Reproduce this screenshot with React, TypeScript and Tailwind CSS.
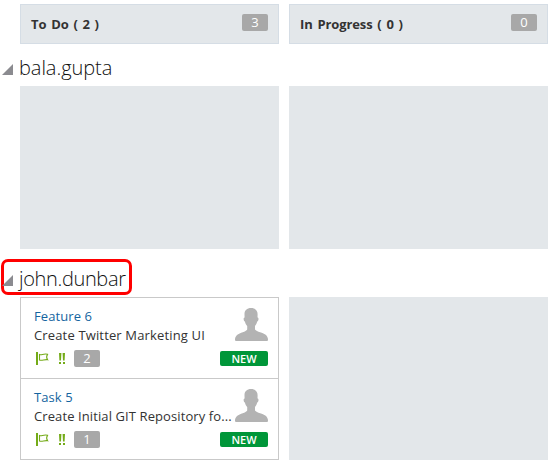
import type { ReactNode } from "react";

function Flag() {
  return (
    <svg width="13" height="13" viewBox="0 0 13 13" className="block" fill="none">
      <rect x="0" y="0" width="2" height="13" fill="#74ab18" />
      <path d="M3.5 2.6C5.5 3.6 7.5 1.2 11.6 2.3C10.4 4 10.4 6 11.6 7.7C8.5 7.2 6 9 3.5 8.1Z" stroke="#74ab18" strokeWidth="1.1" />
    </svg>
  );
}

function Priority() {
  return (
    <svg width="6" height="11" viewBox="0 0 6 11" className="block" fill="#74ab18">
      <path d="M0 0H2.4L2 7.5H.4ZM3.6 0H6L5.6 7.5H4ZM0 9H2V11H0ZM4 9H6V11H4Z" />
    </svg>
  );
}

function Avatar() {
  return (
    <svg width="33" height="33" viewBox="0 0 33 33" className="block" fill="#b3b3b3">
      <path d="M16 0C20 0 22.7 2.4 22.6 6.5L22.5 9.4C24 9.3 23.8 12.8 22.2 13.6C21.8 15.5 21 16.8 20 18V21.5C21.5 24 28.5 24.5 31 27C32.5 28.5 33 30.5 33 31.5C33 32.5 32.5 33 31.5 33H1.5C.5 33 0 32.5 0 31.5C0 30 .5 28.5 2 27C5 24.5 11 24 12.2 21.5V18C11 16.8 10.3 15.5 9.9 13.6C8.3 12.8 8.2 9.3 9.6 9.4L9.5 6.5C9.4 2.4 12 0 16 0Z" />
    </svg>
  );
}

function Count({ children }: { children: ReactNode }) {
  return (
    <span className="flex h-[17px] w-[26px] items-center justify-center rounded-[2px] bg-[#a8a8a8] text-[13px] leading-[17px] text-white">
      {children}
    </span>
  );
}

function ColumnHeader({ title, count }: { title: string; count: number }) {
  return (
    <div className="flex h-10 w-[259px] justify-between border border-[#d5dde5] bg-[#e3e7ea] pt-[9px] pr-[10px] pl-[10px]">
      <h2 className="text-[13px] leading-[20px] font-bold tracking-[-0.1px] whitespace-nowrap text-[#333] [word-spacing:1.5px]">{title}</h2>
      <Count>{count}</Count>
    </div>
  );
}

function RowTitle({ name, tracking }: { name: string; tracking: string }) {
  return (
    <div className="flex items-center gap-[6px] pl-[2px]">
      <svg width="11" height="11" viewBox="0 0 11 11" className="mt-[3px] block shrink-0" fill="#8b8b90">
        <path d="M11 0V11H0Z" />
      </svg>
      <h3 className={`text-[20px] leading-[28px] font-light whitespace-nowrap text-[#111] ${tracking}`}>{name}</h3>
    </div>
  );
}

function Card({ id, title, count, tracking }: { id: string; title: string; count: number; tracking: string }) {
  return (
    <article className="flex h-[81px] flex-col border-b border-[#c9c9c9] pr-[10px] pl-[13px]">
      <div className="flex h-[52px] justify-between pt-[10px]">
        <div className="-mt-px w-0 whitespace-nowrap">
          <div className="text-[13px] leading-[19px] tracking-[0.08px] text-[#1464a0]">{id}</div>
          <div className={`text-[13px] leading-[19px] text-[#333] ${tracking}`}>{title}</div>
        </div>
        <Avatar />
      </div>
      <div className="flex items-center justify-between">
        <div className="flex items-center pl-[2px]">
          <Flag />
          <span className="ml-[10px]"><Priority /></span>
          <span className="ml-[9px]"><Count>{count}</Count></span>
        </div>
        <span className="flex h-[15px] w-12 items-center justify-center rounded-[2px] bg-[#009639] text-[11px] leading-[15px] font-semibold text-white">
          NEW
        </span>
      </div>
    </article>
  );
}

function EmptyCell() {
  return <div className="h-[163px] w-[259px] bg-[#e3e7ea]" />;
}

export default function App() {
  return (
    <main className="h-[464px] w-[551px] overflow-hidden bg-white pt-1 font-['Open_Sans','Noto_Sans',sans-serif]">
      <div className="flex gap-[10px] pl-5">
        <ColumnHeader title="To Do ( 2 )" count={3} />
        <ColumnHeader title="In Progress ( 0 )" count={0} />
      </div>
      <section>
        <div className="h-[42px] pt-[10px]">
          <RowTitle name="bala.gupta" tracking="tracking-[-0.05px]" />
        </div>
        <div className="flex gap-[10px] pl-5">
          <EmptyCell />
          <EmptyCell />
        </div>
      </section>
      <section>
        <div className="h-12 pt-[10px] pl-px">
          <div className="flex h-[36px] w-[131px] items-center rounded-[7px] border-3 border-[#ff0000]">
            <div className="-ml-[4px] pt-[4px]">
              <RowTitle name="john.dunbar" tracking="tracking-[-0.35px]" />
            </div>
          </div>
        </div>
        <div className="flex gap-[10px] pl-5">
          <div className="h-[163px] w-[259px] border-x border-t border-[#c9c9c9] bg-white">
            <Card id="Feature 6" title="Create Twitter Marketing UI" count={2} tracking="tracking-[0.15px]" />
            <Card id="Task 5" title="Create Initial GIT Repository fo..." count={1} tracking="tracking-[0.1px]" />
          </div>
          <EmptyCell />
        </div>
      </section>
    </main>
  );
}
